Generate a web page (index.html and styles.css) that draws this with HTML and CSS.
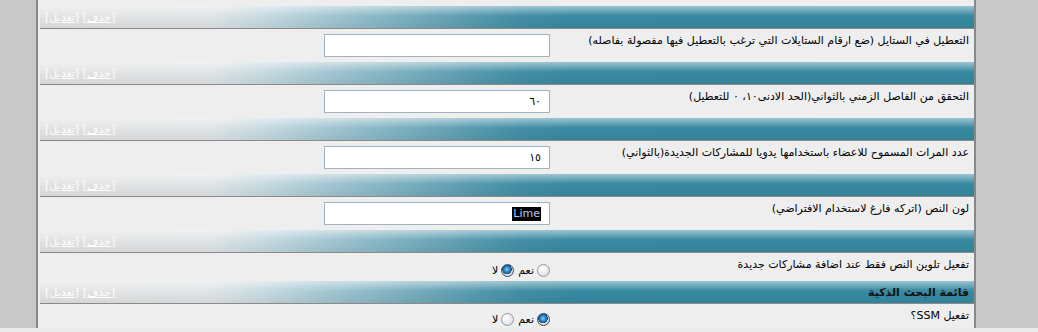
FILE: index.html
```html
<!DOCTYPE html>
<html lang="ar" dir="rtl">

<head>
    <meta charset="UTF-8">
    <meta name="viewport" content="width=device-width, initial-scale=1.0">
    <title>إعدادات المشاركات</title>
    <link rel="stylesheet" href="styles.css">
</head>

<body>
    <div class="panel">
        <div class="stub"></div>

        <div class="bar">
            <span class="bar-title"></span>
            <span class="tools"><a href="#">[حذف]</a> <a href="#">[تعديل]</a></span>
        </div>
        <div class="row">
            <div class="label">التعطيل في الستايل (ضع ارقام الستايلات التي ترغب بالتعطيل فيها مفصولة بفاصله)</div>
            <div class="field"><input type="text" class="text" value=""></div>
        </div>

        <div class="bar">
            <span class="bar-title"></span>
            <span class="tools"><a href="#">[حذف]</a> <a href="#">[تعديل]</a></span>
        </div>
        <div class="row">
            <div class="label">التحقق من الفاصل الزمني بالثواني(الحد الادنى١٠، ٠ للتعطيل)</div>
            <div class="field"><input type="text" class="text" value="٦٠"></div>
        </div>

        <div class="bar">
            <span class="bar-title"></span>
            <span class="tools"><a href="#">[حذف]</a> <a href="#">[تعديل]</a></span>
        </div>
        <div class="row">
            <div class="label">عدد المرات المسموح للاعضاء باستخدامها يدويا للمشاركات الجديدة(بالثواني)</div>
            <div class="field"><input type="text" class="text" value="١٥"></div>
        </div>

        <div class="bar">
            <span class="bar-title"></span>
            <span class="tools"><a href="#">[حذف]</a> <a href="#">[تعديل]</a></span>
        </div>
        <div class="row">
            <div class="label">لون النص (اتركه فارغ لاستخدام الافتراضي)</div>
            <div class="field"><div class="text fake"><span class="picked">Lime</span></div></div>
        </div>

        <div class="bar">
            <span class="bar-title"></span>
            <span class="tools"><a href="#">[حذف]</a> <a href="#">[تعديل]</a></span>
        </div>
        <div class="row short">
            <div class="label">تفعيل تلوين النص فقط عند اضافة مشاركات جديدة</div>
            <div class="field radios">
                <label><input type="radio" name="color_new"> نعم</label>
                <label><input type="radio" name="color_new" checked> لا</label>
            </div>
        </div>

        <div class="bar">
            <span class="bar-title">قائمة البحث الذكية</span>
            <span class="tools"><a href="#">[حذف]</a> <a href="#">[تعديل]</a></span>
        </div>
        <div class="row last">
            <div class="label">تفعيل SSM؟</div>
            <div class="field radios">
                <label><input type="radio" name="ssm" checked> نعم</label>
                <label><input type="radio" name="ssm"> لا</label>
            </div>
        </div>
    </div>
    <div class="footer"></div>
</body>
</html>
```

FILE: styles.css
```css
body {
    margin: 0;
    background-color: #c9c9c9;
    font-family: "DejaVu Sans", sans-serif;
    font-size: 11px;
    color: #000;
    overflow: hidden;
}

.panel {
    margin-left: 36px;
    margin-right: 62px;
    border-left: 2px solid #888;
    border-right: 2px solid #888;
    padding-left: 2px;
    background-color: #eeeeee;
}

.stub {
    height: 6px;
}

.bar {
    height: 22px;
    border-bottom: 1px solid #8a8a8a;
    display: flex;
    align-items: center;
    justify-content: space-between;
    padding: 0 5px;
    background:
        linear-gradient(to bottom, rgba(255, 255, 255, 0.5), rgba(255, 255, 255, 0) 45%, rgba(0, 0, 0, 0.06)),
        linear-gradient(to right, #e3e3e3 0, #e1e5e7 170px, #c6dae0 225px, #9dc3cf 300px, #7eb1c0 360px, #5a9cb0 430px, #438fa6 480px, #388aa2 530px, #378aa1 100%);
}

.bar-title {
    font-weight: bold;
    color: #111;
}

.tools a {
    color: #ffffff;
    text-decoration: underline;
    unicode-bidi: isolate;
}

.row {
    height: 33px;
    display: flex;
}

.row.short {
    height: 28px;
}

.row.last {
    height: 24px;
}

.label {
    flex: 1;
    padding: 5px 5px 0 0;
    line-height: 14px;
}

.field {
    width: 510px;
    padding-right: 10px;
    padding-top: 5px;
}

.text {
    box-sizing: border-box;
    width: 226px;
    height: 23px;
    border: 1px solid #9db4c2;
    background: #fff;
    font-family: "DejaVu Sans", sans-serif;
    font-size: 11px;
    padding: 0 8px;
    text-align: right;
    outline: none;
}

.fake {
    display: flex;
    align-items: center;
}

.picked {
    background: #000;
    color: #bcc8ff;
    padding: 1px 1px;
    line-height: 12px;
}

.radios {
    display: flex;
    gap: 4px;
    padding-top: 7px;
}

.radios label {
    display: flex;
    align-items: center;
    gap: 3px;
}

input[type="radio"] {
    appearance: none;
    margin: 0;
    width: 13px;
    height: 13px;
    border-radius: 50%;
    border: 1px solid #8d9aa6;
    background: radial-gradient(circle at 40% 35%, #ffffff 0, #f1f1f1 40%, #cfcfcf 100%);
    box-sizing: border-box;
}

input[type="radio"]:checked {
    border-color: #3b4a58;
    background:
        radial-gradient(circle at 45% 40%, #8fd0ff 0, #2a86c8 30%, #1a4f80 52%, transparent 56%),
        radial-gradient(circle at 40% 35%, #ffffff 0, #eeeeee 45%, #c9c9c9 100%);
}

.footer {
    height: 10px;
    background-color: #ebebeb;
}
```
